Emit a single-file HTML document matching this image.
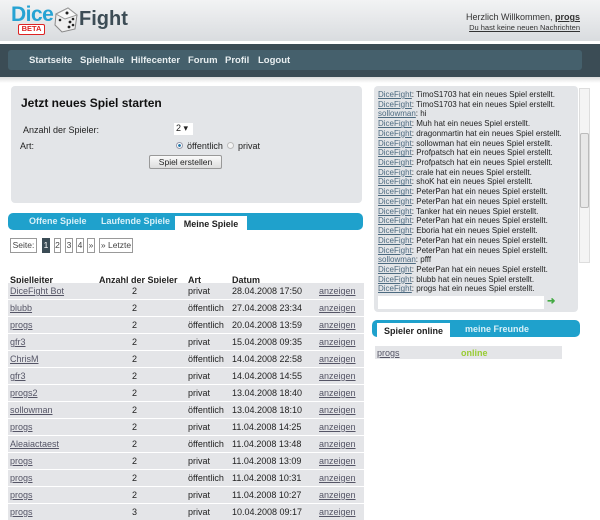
<!DOCTYPE html>
<html><head><meta charset="utf-8"><style>
*{margin:0;padding:0;box-sizing:border-box}
body{width:600px;height:509px;overflow:hidden;background:#fff;font-family:"Liberation Sans",sans-serif;font-size:9px;color:#222;position:relative}
.a{position:absolute}
a{color:#556;text-decoration:underline}
#hdr{left:0;top:0;width:600px;height:43px;background:linear-gradient(#f2f3f4,#d9dcdf);border-bottom:2px solid #fff}
#nav{left:0;top:44px;width:600px;height:33px;background:#3b4c55}
#navin{left:8px;top:50px;width:574px;height:20px;background:#45606c;border-radius:3px}
#nav2{left:0;top:77px;width:600px;height:6px;background:linear-gradient(#ddd,#fff)}
.nv{top:55px;color:#e8eef0;font-weight:bold;font-size:9.5px}
.panel{background:#e3e5e8;border-radius:4px}
.tabs{background:#1fa1cc;border-radius:5px}
.tab{color:#d8f0f8;font-weight:bold;font-size:9px}
.tact{background:#fff;color:#222;font-weight:bold;text-align:center;font-size:9px;padding-top:3px}
.row{left:8px;width:356px;height:16px;background:#e4e5e8}
.row span{position:absolute;top:3px}
.pg{top:238px;height:15px;border:1px solid #999;background:#fff;color:#444;font-size:8.5px;text-align:center;line-height:13px}
.ch div{height:9.72px;line-height:9.72px;font-size:8px;white-space:nowrap}
.ch a{color:#4c6a80}
</style></head><body>
<div id="hdr" class="a"></div>
<div class="a" style="left:11px;top:3px;font-size:21px;font-weight:bold;color:#27a3d3;letter-spacing:-0.5px">Dice</div>
<div class="a" style="left:18px;top:24px;width:27px;height:11px;border:1.5px solid #d22;background:#fff;border-radius:2px;color:#d22;font-size:7.5px;font-weight:bold;text-align:center;line-height:8px">BETA</div>
<svg class="a" style="left:53px;top:5px" width="26" height="28" viewBox="0 0 26 28"><polygon points="3,9 15,3 24,10 22,24 9,27 2,20" fill="#eee" stroke="#888"/><polygon points="3,9 15,3 24,10 12,14" fill="#f8f8f8" stroke="#999"/><circle cx="14" cy="8" r="1.5" fill="#222"/><circle cx="7" cy="15" r="1.3" fill="#222"/><circle cx="17" cy="17" r="1.4" fill="#222"/><circle cx="20" cy="14" r="1.3" fill="#222"/><circle cx="16" cy="22" r="1.4" fill="#222"/><circle cx="20" cy="20" r="1.3" fill="#222"/></svg>
<div class="a" style="left:79px;top:8px;font-size:20px;font-weight:bold;color:#3c4c55">Fight</div>
<div class="a" style="right:20px;top:12px;font-size:9px;color:#333">Herzlich Willkommen, <b style="text-decoration:underline">progs</b></div>
<div class="a" style="right:20px;top:23px;font-size:7.5px;color:#333;text-decoration:underline">Du hast keine neuen Nachrichten</div>
<div id="nav" class="a"></div><div id="navin" class="a"></div><div id="nav2" class="a"></div>
<div class="a nv" style="left:29px">Startseite</div>
<div class="a nv" style="left:80px">Spielhalle</div>
<div class="a nv" style="left:131px">Hilfecenter</div>
<div class="a nv" style="left:188px">Forum</div>
<div class="a nv" style="left:225px">Profil</div>
<div class="a nv" style="left:258px">Logout</div>

<div class="a panel" style="left:11px;top:86px;width:351px;height:117px"></div>
<div class="a" style="left:21px;top:96px;font-size:12px;font-weight:bold;color:#111">Jetzt neues Spiel starten</div>
<div class="a" style="left:23px;top:125px">Anzahl der Spieler:</div>
<div class="a" style="left:174px;top:123px;width:19px;height:12px;background:#fff;font-size:9px;padding-left:2px">2 ▾</div>
<div class="a" style="left:20px;top:141px">Art:</div>
<div class="a" style="left:176px;top:142px;width:7px;height:7px;border-radius:50%;border:1px solid #99a;background:radial-gradient(#27a 35%,#fff 45%)"></div>
<div class="a" style="left:187px;top:141px">öffentlich</div>
<div class="a" style="left:227px;top:142px;width:7px;height:7px;border-radius:50%;border:1px solid #bbb;background:#f4f4f4"></div>
<div class="a" style="left:238px;top:141px">privat</div>
<div class="a" style="left:149px;top:155px;width:73px;height:14px;border:1px solid #999;background:linear-gradient(#fafafa,#ddd);border-radius:2px;font-size:8.5px;text-align:center;line-height:12px">Spiel erstellen</div>

<div class="a tabs" style="left:8px;top:213px;width:355px;height:17px"></div>
<div class="a tab" style="left:29px;top:216px">Offene Spiele</div>
<div class="a tab" style="left:101px;top:216px">Laufende Spiele</div>
<div class="a tact" style="left:175px;top:216px;width:72px;height:14px">Meine Spiele</div>

<div class="a pg" style="left:10px;width:27px">Seite:</div>
<div class="a pg" style="left:42px;width:8px;background:#3b4c55;color:#fff;border-color:#3b4c55">1</div>
<div class="a pg" style="left:54px;width:7px">2</div>
<div class="a pg" style="left:65px;width:8px">3</div>
<div class="a pg" style="left:76px;width:8px">4</div>
<div class="a pg" style="left:87px;width:8px">»</div>
<div class="a pg" style="left:99px;width:34px">» Letzte</div>

<div class="a" style="left:10px;top:275px;font-weight:bold">Spielleiter</div>
<div class="a" style="left:99px;top:275px;font-weight:bold">Anzahl der Spieler</div>
<div class="a" style="left:188px;top:275px;font-weight:bold">Art</div>
<div class="a" style="left:232px;top:275px;font-weight:bold">Datum</div>

<div class="a row" style="top:283px"><span style="left:2px"><a>DiceFight Bot</a></span><span style="left:124px">2</span><span style="left:180px">privat</span><span style="left:224px">28.04.2008 17:50</span><span style="left:311px"><a>anzeigen</a></span></div>
<div class="a row" style="top:300px"><span style="left:2px"><a>blubb</a></span><span style="left:124px">2</span><span style="left:180px">öffentlich</span><span style="left:224px">27.04.2008 23:34</span><span style="left:311px"><a>anzeigen</a></span></div>
<div class="a row" style="top:317px"><span style="left:2px"><a>progs</a></span><span style="left:124px">2</span><span style="left:180px">öffentlich</span><span style="left:224px">20.04.2008 13:59</span><span style="left:311px"><a>anzeigen</a></span></div>
<div class="a row" style="top:334px"><span style="left:2px"><a>gfr3</a></span><span style="left:124px">2</span><span style="left:180px">privat</span><span style="left:224px">15.04.2008 09:35</span><span style="left:311px"><a>anzeigen</a></span></div>
<div class="a row" style="top:351px"><span style="left:2px"><a>ChrisM</a></span><span style="left:124px">2</span><span style="left:180px">öffentlich</span><span style="left:224px">14.04.2008 22:58</span><span style="left:311px"><a>anzeigen</a></span></div>
<div class="a row" style="top:368px"><span style="left:2px"><a>gfr3</a></span><span style="left:124px">2</span><span style="left:180px">privat</span><span style="left:224px">14.04.2008 14:55</span><span style="left:311px"><a>anzeigen</a></span></div>
<div class="a row" style="top:385px"><span style="left:2px"><a>progs2</a></span><span style="left:124px">2</span><span style="left:180px">privat</span><span style="left:224px">13.04.2008 18:40</span><span style="left:311px"><a>anzeigen</a></span></div>
<div class="a row" style="top:402px"><span style="left:2px"><a>sollowman</a></span><span style="left:124px">2</span><span style="left:180px">öffentlich</span><span style="left:224px">13.04.2008 18:10</span><span style="left:311px"><a>anzeigen</a></span></div>
<div class="a row" style="top:419px"><span style="left:2px"><a>progs</a></span><span style="left:124px">2</span><span style="left:180px">privat</span><span style="left:224px">11.04.2008 14:25</span><span style="left:311px"><a>anzeigen</a></span></div>
<div class="a row" style="top:436px"><span style="left:2px"><a>Aleaiactaest</a></span><span style="left:124px">2</span><span style="left:180px">öffentlich</span><span style="left:224px">11.04.2008 13:48</span><span style="left:311px"><a>anzeigen</a></span></div>
<div class="a row" style="top:453px"><span style="left:2px"><a>progs</a></span><span style="left:124px">2</span><span style="left:180px">privat</span><span style="left:224px">11.04.2008 13:09</span><span style="left:311px"><a>anzeigen</a></span></div>
<div class="a row" style="top:470px"><span style="left:2px"><a>progs</a></span><span style="left:124px">2</span><span style="left:180px">öffentlich</span><span style="left:224px">11.04.2008 10:31</span><span style="left:311px"><a>anzeigen</a></span></div>
<div class="a row" style="top:487px"><span style="left:2px"><a>progs</a></span><span style="left:124px">2</span><span style="left:180px">privat</span><span style="left:224px">11.04.2008 10:27</span><span style="left:311px"><a>anzeigen</a></span></div>
<div class="a row" style="top:504px"><span style="left:2px"><a>progs</a></span><span style="left:124px">3</span><span style="left:180px">privat</span><span style="left:224px">10.04.2008 09:17</span><span style="left:311px"><a>anzeigen</a></span></div>

<div class="a panel" style="left:374px;top:86px;width:204px;height:226px"></div>
<div class="a" style="left:579px;top:88px;width:11px;height:175px;background:#f4f4f4;border:1px solid #ddd"></div>
<div class="a" style="left:580px;top:133px;width:9px;height:75px;background:#e8e8e8;border:1px solid #bbb;border-radius:2px"></div>
<div class="a ch" style="left:378px;top:90px">
<div><a>DiceFight</a>: TimoS1703 hat ein neues Spiel erstellt.</div>
<div><a>DiceFight</a>: TimoS1703 hat ein neues Spiel erstellt.</div>
<div><a>sollowman</a>: hi</div>
<div><a>DiceFight</a>: Muh hat ein neues Spiel erstellt.</div>
<div><a>DiceFight</a>: dragonmartin hat ein neues Spiel erstellt.</div>
<div><a>DiceFight</a>: sollowman hat ein neues Spiel erstellt.</div>
<div><a>DiceFight</a>: Profpatsch hat ein neues Spiel erstellt.</div>
<div><a>DiceFight</a>: Profpatsch hat ein neues Spiel erstellt.</div>
<div><a>DiceFight</a>: crale hat ein neues Spiel erstellt.</div>
<div><a>DiceFight</a>: shoK hat ein neues Spiel erstellt.</div>
<div><a>DiceFight</a>: PeterPan hat ein neues Spiel erstellt.</div>
<div><a>DiceFight</a>: PeterPan hat ein neues Spiel erstellt.</div>
<div><a>DiceFight</a>: Tanker hat ein neues Spiel erstellt.</div>
<div><a>DiceFight</a>: PeterPan hat ein neues Spiel erstellt.</div>
<div><a>DiceFight</a>: Eboria hat ein neues Spiel erstellt.</div>
<div><a>DiceFight</a>: PeterPan hat ein neues Spiel erstellt.</div>
<div><a>DiceFight</a>: PeterPan hat ein neues Spiel erstellt.</div>
<div><a>sollowman</a>: pfff</div>
<div><a>DiceFight</a>: PeterPan hat ein neues Spiel erstellt.</div>
<div><a>DiceFight</a>: blubb hat ein neues Spiel erstellt.</div>
<div><a>DiceFight</a>: progs hat ein neues Spiel erstellt.</div>
</div>
<div class="a" style="left:378px;top:296px;width:166px;height:13px;background:#fff"></div>
<div class="a" style="left:547px;top:296px;font-size:10px;color:#4a4;font-weight:bold">➜</div>

<div class="a tabs" style="left:372px;top:320px;width:208px;height:17px"></div>
<div class="a tact" style="left:377px;top:323px;width:73px;height:14px">Spieler online</div>
<div class="a tab" style="left:465px;top:324px">meine Freunde</div>
<div class="a" style="left:375px;top:346px;width:187px;height:13px;background:#e4e5e8"></div>
<div class="a" style="left:377px;top:348px"><a>progs</a></div>
<div class="a" style="left:461px;top:348px;color:#9c3;font-weight:bold">online</div>
</body></html>
